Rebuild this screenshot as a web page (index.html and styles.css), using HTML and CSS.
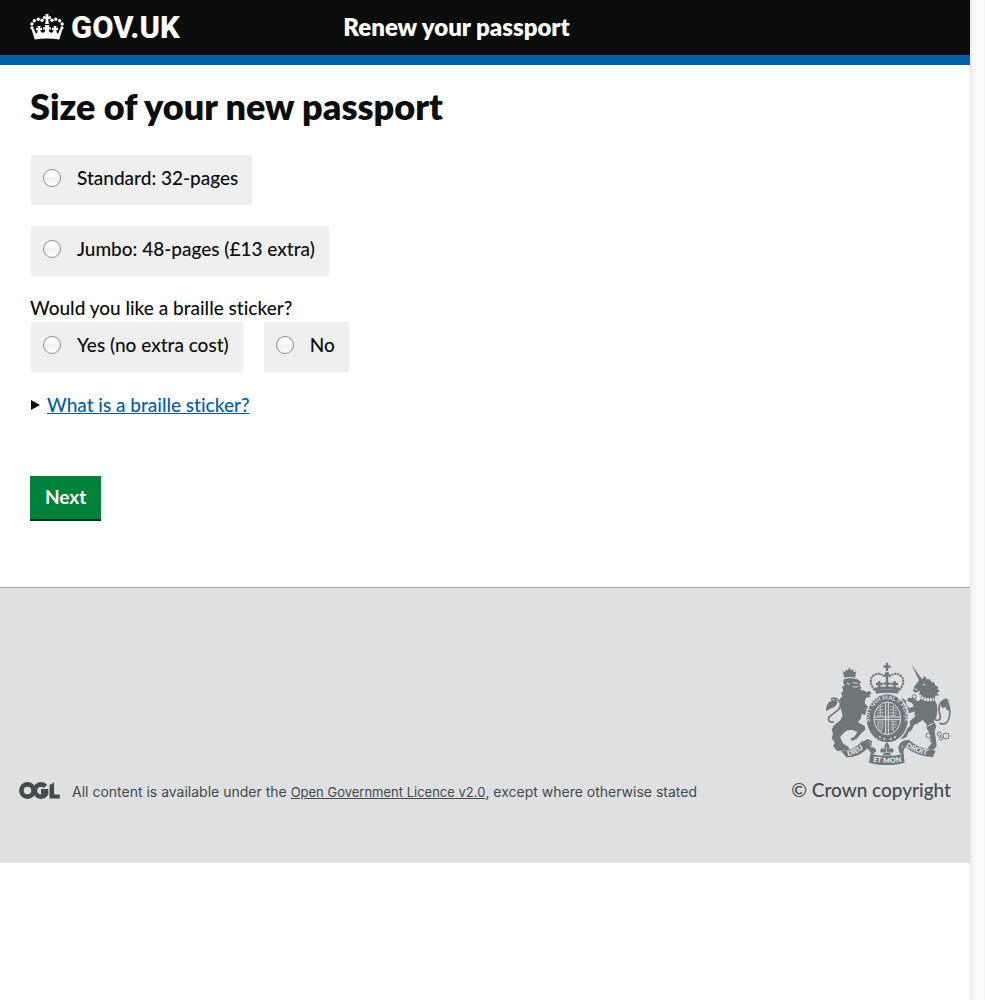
FILE: index.html
```
<!DOCTYPE html>
<html lang="en">
<head>
<meta charset="utf-8">
<meta name="viewport" content="width=device-width, initial-scale=1">
<title>Renew your passport - GOV.UK</title>
<link rel="stylesheet" href="styles.css">
</head>
<body>
<div class="page">
  <header class="header">
    <a class="logo" href="#">
      <svg class="logo-crown" viewBox="0 0 34 27" aria-hidden="true">
        <g fill="#fff">
          <path d="M15.400 0h3.200l-.4 2.400 2.600-.4v3.200l-2.600-.4.7 5.200h-3.800l.7-5.200-2.600.4V2l2.600.4z"/>
          <circle cx="12" cy="6.200" r="1.700"/><circle cx="8.300" cy="5.300" r="1.700"/><circle cx="4.300" cy="6.800" r="1.700"/><circle cx="1.900" cy="10" r="1.700"/><circle cx="2" cy="13.800" r="1.600"/>
          <circle cx="22" cy="6.200" r="1.700"/><circle cx="25.700" cy="5.300" r="1.700"/><circle cx="29.700" cy="6.800" r="1.700"/><circle cx="32.100" cy="10" r="1.700"/><circle cx="32" cy="13.800" r="1.600"/>
          <path d="M1.500 15l2.300-.5 2 5 1.200-.2.800-3.600-1.800.8v-3l2 .7-.6-2.200h3.200l-.6 2.200 2-.7v3l-1.800-.8c.4 2.300 1.700 3.300 3.500 2.800 1.400-.5 1.700-1.600 1.200-3.300l-1.700.7v-3l2 .6-.5-2.500h4.600l-.5 2.500 2-.6v3l-1.700-.7c-.5 1.700-.2 2.800 1.200 3.300 1.800.5 3.100-.5 3.500-2.800l-1.800.8v-3l2 .7-.6-2.200h3.200l-.6 2.200 2-.7v3l-1.800-.8.8 3.600 1.200.2 2-5 2.300.5-3.200 10.500c-8-1.400-16.600-1.400-24.600 0z"/>
        </g>
      </svg>
      <span>GOV.UK</span>
    </a>
    <span class="service">Renew your passport</span>
  </header>

  <main class="main">
    <h1>Size of your new passport</h1>
    <form class="form">
      <label class="choice"><input type="radio" name="size"><span>Standard: 32-pages</span></label>
      <label class="choice"><input type="radio" name="size"><span>Jumbo: 48-pages (£13 extra)</span></label>
      <fieldset>
        <legend>Would you like a braille sticker?</legend>
        <div class="row">
          <label class="choice"><input type="radio" name="braille"><span>Yes (no extra cost)</span></label>
          <label class="choice"><input type="radio" name="braille"><span>No</span></label>
        </div>
      </fieldset>
      <details>
        <summary><svg class="arrow" viewBox="0 0 9 10" aria-hidden="true"><path d="M0 0l9 5-9 5z" fill="#0b0c0c"/></svg><span>What is a braille sticker?</span></summary>
      </details>
      <button class="next" type="button">Next</button>
    </form>
  </main>

  <footer class="footer">
    <div class="licence">
      <svg class="ogl" viewBox="0 0 41 17" role="img" aria-label="OGL">
        <g fill="none" stroke="#454a4d" stroke-width="4.600">
          <circle cx="8.500" cy="8.500" r="6.100"/>
          <path d="M26.500 4.400A6.100 6.100 0 1 0 27 12V9.400h-5"/>
        </g>
        <path d="M30.500 3l4.600-2.500v12h5.700v4H30.500z" fill="#454a4d"/>
      </svg>
      <p>All content is available under the <a href="#">Open Government Licence v2.0</a>, except where otherwise stated</p>
    </div>
    <a class="copyright" href="#">
      <svg class="crest" viewBox="12 12 375 309" aria-hidden="true">
        <g fill="#6f777b">
          <!-- lion -->
          <path d="M67 59L62 40l8 3 1-8 7 2 4-10 5 10 7-3 1 9 8-3-4 20q-16-4-32-1z"/>
          <path d="M66 63Q85 56 104 62L117 72 112 80 118 89 114 97 122 96 134 102 142 99 149 106 142 110 146 116 134 119 130 124 128 136 137 145 141 158 147 170 156 185 150 193 140 184 132 172 119 168 117 181 108 193 128 204 130 215 118 226 104 242 92 248 84 243 97 236 106 222 91 216 76 217 64 226 54 238 64 257 79 266 82 276 45 279 33 263 39 254 29 241 33 228 29 214 36 202 55 187 62 172 58 158 54 147 57 140 55 132 54 122 61 115 57 104 64 98 60 86 68 82 63 73z"/>
          <!-- unicorn -->
          <path d="M269 21L300 64 292 69z"/>
          <path d="M290 68L303 61 308 53 314 64 323 64 328 71 338 74 339 82 348 86 347 94 354 101 345 103 351 113 340 112 338 126 345 140 346 158 343 179 335 190 343 204 338 220 342 245 344 265 329 277 317 271 329 256 325 230 315 213 313 198 302 186 288 196 275 202 271 214 258 225 254 237 240 243 231 238 243 230 249 216 264 204 263 190 279 176 277 160 262 166 252 174 244 166 254 160 249 147 239 134 240 120 251 127 254 142 263 150 276 145 270 135 255 128 259 119 273 120 289 130 296 123 291 112 294 98 281 104 273 98 276 87z"/>
          <!-- tail tufts -->
          <path d="M12 151q3-22 29-28l6 9q-4 16-19 19l-16 8z"/>
          <path d="M360 151q-12-22 11-30l9 6-3 12 9 20-12-3-3-9z"/>
        </g>
        <g fill="none" stroke="#6f777b" stroke-width="5">
          <path d="M26 124q14-9 25 4t-4 29q-17 13-26 20-6 17 15 15"/>
          <path d="M340 185q18 7 14-14-8-27 4-39 12-10 21 5l4 17q2 32-12 42-11 5-18-1"/>
        </g>
        <g fill="none" stroke="#dee0e2" stroke-width="3">
          <path d="M66 61q19-6 38 1M74 76l10 3m8-5l15 2M92 85l8 3 9-3"/>
          <path d="M291 112q17 18 45 12" stroke-width="9" stroke-dasharray="7 2"/>
          <path d="M303 79l8 2M277 92l9 3M316 205l17-9"/>
        </g>
        <!-- crown -->
        <g fill="none" stroke="#6f777b" stroke-width="6">
          <path d="M158 97Q137 69 153 54T190 57M232 97Q253 69 237 54T200 57" stroke-dasharray="7 2"/>
          <path d="M195 45v43M184 26h22M195 14v25" stroke-width="7"/>
          <path d="M162 78h20m-10-9v20M184 77h22M208 78h20m-10-9v20" stroke-width="7"/>
          <path d="M158 94q37-8 74 0M161 103q34-7 68 0" stroke-width="9"/>
        </g>
        <circle cx="195" cy="49" r="7" fill="#6f777b"/>
        <!-- garter and shield -->
        <ellipse cx="196" cy="181" rx="66" ry="76" fill="#dee0e2"/>
        <ellipse cx="196" cy="181" rx="62" ry="72" fill="#6f777b"/>
        <ellipse cx="196" cy="181" rx="40" ry="49" fill="none" stroke="#dee0e2" stroke-width="3"/>
        <g fill="none" stroke="#dee0e2" stroke-width="3">
          <path d="M199 133v96M157 177h78M191 133v96M157 185h78"/>
          <path d="M165 150l20-6m-21 14l22-4m-22 12l22-3m-22 9h20M175 142v30" stroke-width="2"/>
          <path d="M204 145l20 6m-21 3l22 4m-22 5l22 3m-21 6h18M214 142v30" stroke-width="2"/>
          <path d="M166 190l17-1q2 19-6 31-10-8-11-30zm5 2v16m6-18v22" stroke-width="2"/>
          <path d="M205 191h19m-19 8h21m-21 8h17m-17 7h11M213 188v32" stroke-width="2"/>
        </g>
        <g fill="#dee0e2">
          <circle cx="174" cy="238" r="3"/><circle cx="187" cy="243" r="3"/><circle cx="206" cy="243" r="3"/><circle cx="219" cy="238" r="3"/>
        </g>
        <path id="motto" d="M156 224C128 181 144 125 196 125S264 181 236 224" fill="none"/>
        <text class="motto"><textPath href="#motto" startOffset="50%" text-anchor="middle">SOIT QUI MAL Y PENSE</textPath></text>
        <!-- chain -->
        <g fill="none" stroke="#6f777b" stroke-width="3">
          <circle cx="277" cy="116" r="6"/><circle cx="319" cy="233" r="7"/><circle cx="330" cy="246" r="6"/><circle cx="352" cy="228" r="6"/><circle cx="372" cy="234" r="9"/><circle cx="357" cy="241" r="5"/><circle cx="333" cy="268" r="6"/>
        </g>
        <!-- ribbon -->
        <g fill="#6f777b">
          <path d="M58 279q42 1 70-31 12-9 22 2 2 11-4 18 14-2 17 12l-13 11-11-17-9-4q-22 28-57 26z"/>
          <path d="M58 279q34 1 64-31l18 18q-23 31-67 32z"/>
          <path d="M145 287q50 13 100 0l3 27q-53 15-107 0z"/>
          <path d="M232 284q-9-24 12-36l16-3q30 27 68 30l13 4-9 19q-45-2-82-30-7 5-5 22z"/>
          <path d="M195 253q13 14 5 22 11-9 15 1 1 10-10 8l2 8h-24l2-8q-11 2-10-8 4-10 15-1-8-8 5-22z"/>
        </g>
        <path d="M194 264v18m-12 1h26M141 250q10 4 4 15M241 261q-4 8 3 9" fill="none" stroke="#dee0e2" stroke-width="2"/>
        <path id="dieu" d="M78 294q30-5 56-32l12-14" fill="none"/>
        <path id="mon" d="M153 311q42 8 94-1" fill="none"/>
        <path id="droit" d="M251 266q32 22 80 28" fill="none"/>
        <g class="ribbon-text">
          <text><textPath href="#dieu">DIEU</textPath></text>
          <text><textPath href="#mon">ET MON</textPath></text>
          <text><textPath href="#droit">DROIT</textPath></text>
        </g>
      </svg>
      <span>© Crown copyright</span>
    </a>
  </footer>
</div>
<div class="gutter"></div>
</body>
</html>
```
FILE: styles.css
```
* { box-sizing: border-box; }
body {
  margin: 0;
  min-height: 100vh;
  display: grid;
  grid-template-columns: 1fr 15px;
  background: #fff;
  color: #0b0c0c;
  font: 500 19px/25px Lato, "Liberation Sans", sans-serif;
  font-variant-ligatures: none;
}
.gutter {
  background: linear-gradient(90deg, #e8e8e8, #f6f6f6 3px, #fbfbfb 8px, #fbfbfb 13px, #f3f3f3);
}
.header {
  display: grid;
  grid-template-columns: 1fr 2fr;
  align-items: center;
  height: 65px;
  padding: 0 30px;
  background: #0b0c0c;
  border-bottom: 10px solid #005ea5;
  color: #fff;
}
.logo {
  display: flex;
  align-items: center;
  gap: 7px;
  color: #fff;
  font-family: Roboto, sans-serif;
  font-size: 31px;
  font-weight: 800;
  line-height: 31px;
  text-decoration: none;
}
.logo-crown { width: 34px; height: 27px; }
.service {
  padding: 0 0 2px 10px;
  font-size: 24px;
  font-weight: 800;
}
.main { padding: 22px 30px 66px; }
h1 {
  margin: 0 0 29px;
  font-size: 36px;
  line-height: 38px;
  font-weight: 800;
}
.form {
  display: flex;
  flex-direction: column;
  align-items: flex-start;
}
.choice {
  display: flex;
  align-items: center;
  gap: 16px;
  height: 52px;
  margin-bottom: 19px;
  padding: 0 14px 4px 12px;
  background: #efefef;
  border: 1px solid #fff;
}
.choice span { padding-bottom: 2px; }
.choice input {
  appearance: none;
  width: 18px;
  height: 18px;
  margin: 0;
  border: 1px solid #8f8f8f;
  border-radius: 50%;
  background: linear-gradient(#fff 40%, #efefef 50%, #fff);
}
fieldset {
  margin: 0;
  padding: 0;
  border: 0;
}
legend {
  padding: 0 0 2px;
  line-height: 23px;
}
.row { display: flex; gap: 19px; }
details { margin-bottom: 59px; }
summary {
  display: flex;
  align-items: center;
  gap: 7px;
  padding-left: 1px;
  list-style: none;
  color: #005ea5;
  text-decoration: underline;
}
.arrow { width: 9px; height: 10px; }
.next {
  height: 45px;
  padding: 0 15px 2px;
  border: 0;
  border-bottom: 2px solid #003618;
  background: #00823b;
  color: #fff;
  font: inherit;
  font-weight: 700;
}
.footer {
  display: flex;
  justify-content: space-between;
  align-items: flex-end;
  padding: 74px 19px 61px;
  border-top: 1px solid #a1acb2;
  background: #dee0e2;
  color: #454a4d;
}
.licence {
  display: flex;
  align-items: flex-start;
  gap: 12px;
  font-family: Inter, sans-serif;
  font-size: 14px;
  font-weight: 400;
  line-height: 20px;
}
.licence p { margin: 0; }
.licence a { color: inherit; font-size: 13px; }
.ogl { width: 41px; height: 17px; }
.copyright {
  display: flex;
  flex-direction: column;
  align-items: flex-end;
  gap: 12px;
  color: inherit;
  text-decoration: none;
}
.crest { width: 125px; height: 103px; }
.motto {
  fill: #dee0e2;
  font-size: 18px;
  font-weight: 700;
}
.ribbon-text {
  fill: #dee0e2;
  font-size: 22px;
  font-weight: 800;
}
```
